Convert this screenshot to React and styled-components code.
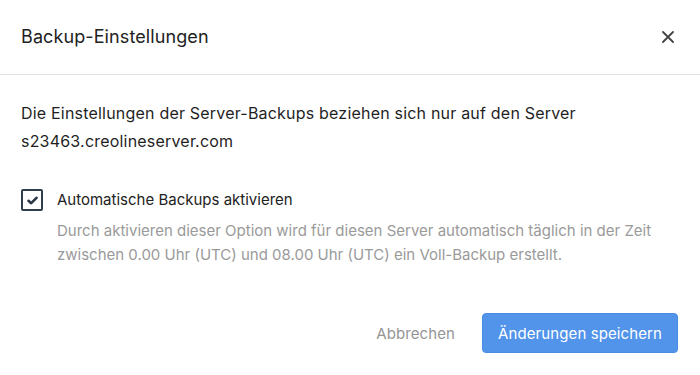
import React from "react";
import styled, { createGlobalStyle } from "styled-components";

const Global = createGlobalStyle`
  html, body { margin: 0; padding: 0; background: #ffffff; }
  body { font-family: Inter, "Noto Sans", "Liberation Sans", sans-serif; -webkit-font-smoothing: antialiased; }
  * { box-sizing: border-box; }
`;

const Modal = styled.div`
  width: 700px;
  height: 375px;
  background: #fff;
  display: flex;
  flex-direction: column;
`;

const Header = styled.div`
  height: 75px;
  padding: 0 22px 0 21px;
  display: flex;
  align-items: center;
  justify-content: space-between;
  border-bottom: 1px solid #e2e2e2;
`;

const Title = styled.h2`
  margin: 0;
  font-size: 18px;
  font-weight: 400;
  letter-spacing: 0.1px;
  color: #222;
  padding-bottom: 1px;
`;

const CloseButton = styled.button`
  border: 0;
  background: none;
  padding: 0;
  width: 20px;
  height: 20px;
  display: flex;
  align-items: center;
  justify-content: center;
  color: #444;
  cursor: pointer;
`;

const Body = styled.div`
  padding: 24px 22px 0 21px;
  flex: 1;
`;

const Lead = styled.p`
  margin: 0;
  font-size: 16px;
  line-height: 28px;
  letter-spacing: 0.2px;
  color: #1f1f1f;
`;

const OptionRow = styled.label`
  display: grid;
  grid-template-columns: 22px 1fr;
  column-gap: 14px;
  margin-top: 34px;
  cursor: pointer;
`;

const Box = styled.span`
  width: 22px;
  height: 22px;
  border: 2px solid #2f3d4c;
  border-radius: 2px;
  display: flex;
  align-items: center;
  justify-content: center;
`;

const OptionText = styled.div`
  display: flex;
  flex-direction: column;
`;

const OptionLabel = styled.span`
  font-size: 15px;
  line-height: 22px;
  color: #222;
`;

const OptionHint = styled.span`
  margin-top: 8px;
  font-size: 15px;
  line-height: 24px;
  color: #9a9a9a;
`;

const Footer = styled.div`
  display: flex;
  justify-content: flex-end;
  align-items: center;
  gap: 27px;
  padding: 0 22px 22px 21px;
`;

const Button = styled.button`
  height: 40px;
  width: ${(p) => (p.$primary ? "196px" : "auto")};
  padding: 0;
  border-radius: 4px;
  border: ${(p) => (p.$primary ? "1px solid #4a8ce3" : "0")};
  background: ${(p) => (p.$primary ? "#5194ea" : "transparent")};
  color: ${(p) => (p.$primary ? "#ffffff" : "#959595")};
  font-family: inherit;
  font-size: 15px;
  font-weight: 400;
  letter-spacing: 0.1px;
  cursor: pointer;
`;

export default function App() {
  return (
    <>
      <Global />
      <Modal>
        <Header>
          <Title>Backup-Einstellungen</Title>
          <CloseButton aria-label="Schließen">
            <svg width="12" height="12" viewBox="0 0 12 12">
              <path d="M1 1L11 11M11 1L1 11" stroke="#444" strokeWidth="1.8" strokeLinecap="round" />
            </svg>
          </CloseButton>
        </Header>
        <Body>
          <Lead>
            Die Einstellungen der Server-Backups beziehen sich nur auf den Server
            <br />
            s23463.creolineserver.com
          </Lead>
          <OptionRow>
            <Box>
              <svg width="11" height="9" viewBox="0 0 11 9">
                <path d="M1.5 4.8L4.2 7.2L9.5 1.8" fill="none" stroke="#2a3746" strokeWidth="2.6" strokeLinecap="round" strokeLinejoin="round" />
              </svg>
            </Box>
            <OptionText>
              <OptionLabel>Automatische Backups aktivieren</OptionLabel>
              <OptionHint>
                Durch aktivieren dieser Option wird für diesen Server automatisch täglich in der Zeit
                <br />
                zwischen 0.00 Uhr (UTC) und 08.00 Uhr (UTC) ein Voll-Backup erstellt.
              </OptionHint>
            </OptionText>
          </OptionRow>
        </Body>
        <Footer>
          <Button>Abbrechen</Button>
          <Button $primary>Änderungen speichern</Button>
        </Footer>
      </Modal>
    </>
  );
}
